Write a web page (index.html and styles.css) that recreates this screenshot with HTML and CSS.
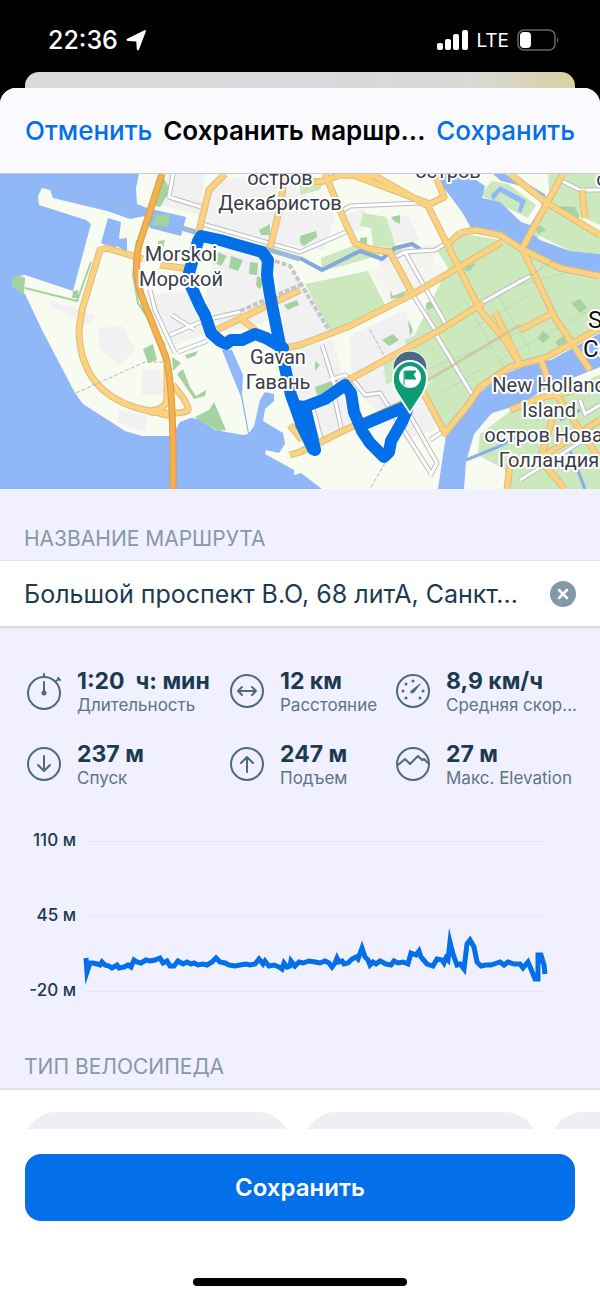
FILE: index.html
```html
<!DOCTYPE html>
<html lang="ru">

<head>
    <meta charset="UTF-8">
    <meta name="viewport" content="width=device-width, initial-scale=1">
    <title>Сохранить маршрут</title>
    <link rel="stylesheet" href="styles.css">
</head>

<body>
    <div class="status">
        <div class="status-time">
            <span>22:36</span>
            <svg width="20" height="22" viewBox="0 0 20 22"><path d="M18 1.500 Q20.500 0 19.600 3 L13 20.500 Q11.800 22.500 10.800 20.300 L10.300 12.500 L1.800 12 Q-0.500 11 1.200 9.800 Z" fill="#fff"/></svg>
        </div>
        <div class="status-right">
            <svg width="31" height="22" viewBox="0 0 31 22" fill="#fff">
                <rect x="0" y="14" width="6" height="7" rx="2"/>
                <rect x="8" y="10" width="6" height="11" rx="2"/>
                <rect x="16" y="5" width="6" height="16" rx="2"/>
                <rect x="25" y="1" width="6" height="20" rx="2"/>
            </svg>
            <span>LTE</span>
            <svg width="42" height="22" viewBox="0 0 42 22">
                <rect x="1" y="1" width="37" height="20" rx="6" fill="none" stroke="#666" stroke-width="1.500"/>
                <rect x="3" y="3" width="11" height="16" rx="4" fill="#fff"/>
                <path d="M40 8 Q42.500 11 40 14 Z" fill="#666"/>
            </svg>
        </div>
    </div>

    <div class="sheet-back"></div>
    <div class="sheet">
        <header class="nav">
            <button type="button" class="nav-btn">Отменить</button>
            <h1>Сохранить маршр...</h1>
            <button type="button" class="nav-btn">Сохранить</button>
        </header>

        <main class="content">
            <svg class="map" viewBox="0 174 600 315">
                <rect x="0" y="174" width="600" height="315" fill="#f8fbf0"/>
                <!-- кварталы -->
                <g fill="#f1f1f2">
                    <path d="M168 174 H205 L200 215 L160 205Z M212 180 L275 174 L335 215 L325 250 L270 242 L205 224Z"/>
                    <path d="M150 295 L190 290 L215 330 L175 345 Z M215 250 L262 258 L272 320 L225 333 L205 300Z"/>
                    <path d="M275 262 L295 275 L332 333 L285 350Z M288 352 L332 340 L346 385 L300 400Z"/>
                    <path d="M350 335 L405 310 L440 395 L434 430 L405 440 L352 385Z M303 415 L340 395 L355 425 L320 448Z"/>
                    <path d="M98 328 L122 326 L135 350 L120 366 L100 348Z M142 370 H160 L165 395 H142Z M118 410 L148 416 L145 432 L118 422Z"/>
                    <path d="M345 215 L365 208 L363 230 L343 232Z M385 220 L408 215 L420 240 L395 243Z M375 250 L430 245 L438 275 L390 300Z M50 300 L95 315 L90 325 L50 306Z"/>
                </g>
                <!-- парки -->
                <g fill="#cce8bd">
                    <path d="M305 284 L368 271 L388 311 L330 330Z M321 258 L361 243 L380 255 L335 268 L322 270Z M363 213 L386 217 L396 247 L373 246 L371 228 L360 226Z"/>
                    <path d="M437 250 L460 233 L500 240 L522 251 L600 280 V330 L545 358 L510 368 L480 388 L446 433 L424 390 L438 372 L415 334 L448 268Z"/>
                    <path d="M524 247 L552 202 L590 225 L600 232 V254 L570 251 L540 236Z M548 174 H600 V225 L550 203Z M480 195 L492 181 L508 184 L536 205 L528 218Z"/>
                    <path d="M480 434 L520 404 L600 375 V489 H505 L505 470 L478 455Z M382 248 L405 245 L400 253 L382 255Z M300 180 L325 178 L320 190 L300 195Z"/>
                    <path d="M405 340 L420 333 L440 372 L425 385 L410 360Z M383 360 L398 355 L402 377 L386 385Z"/>
                </g>
                <path d="M370 271 L420 252 L447 271 L388 305Z" fill="#f4f5ef"/>
                <path d="M502 290 L600 263 M470 330 L530 295 M485 350 L560 310 M500 360 L590 310 M465 300 L505 370 M495 290 L530 350 M425 370 L490 345 M438 395 L480 370" stroke="#bfdcb0" stroke-width="1" fill="none"/>
                <!-- вода -->
                <g fill="#90b8f8">
                    <path d="M0 174 H139 L136 188 L137 204 L147 208 L186 217 L181 236 L150 228 L145 216 L130 219 L107 211 L53 198 L50 190 L42 188 L38 196 L39 205 L86 220 L91 224 L73 291 L25 275 L14 277 L12 285 L25 294 L42 330 L75 393 L83 404 L125 431 L142 436 H172 L180 422 L190 418 L199 419 L215 430 L243 435 L248 434 L241 397 L222 350 L232 350 L243 375 L242 394 L249 433 L254 426 L260 400 L265 392 L274 394 L274 401 L265 409 L263 421 L283 433 L285 444 L279 453 L266 450 L265 454 L294 470 L294 475 L301 473 L322 489 H0Z"/>
                    <path d="M108 218 L121 222 L119 239 L127 238 L127 252 L117 246 L113 248 L101 243Z"/>
                    <path d="M437 174 H467 L485 186 L482 198 L500 202 L521 222 L530 225 L542 206 L540 198 L521 186 L501 181 L493 174 H505 L522 181 L545 194 L548 205 L530 232 L540 240 L570 251 L600 254 V274 L565 268 L520 247 L505 240 L480 231 L471 228 L462 212 L444 188Z"/>
                    <path d="M491 195 L500 186 L526 200 L521 213 L518 211 L520 203 L500 192 L493 201Z"/>
                    <path d="M600 333 L551 360 L535 362 L500 376 L476 396 L456 418 L446 435 L438 489 H464 L466 462 L474 434 L492 413 L518 405 L548 388 L600 367Z"/>
                </g>
                <path d="M300 258 L322 270 L360 251 L382 259 L395 248 L412 244 L420 249" stroke="#84a8dc" stroke-width="4" fill="none"/>
                <path d="M182 228 L205 235 L270 250 L300 259" stroke="#9bbad8" stroke-width="5" fill="none"/>
                <path d="M466 460 L498 447 L520 435 M560 420 L580 410 M570 450 L585 489" stroke="#84aef0" stroke-width="3" fill="none"/>
                <path d="M164 178 L170 190 L160 207 L153 205Z M155 215 L170 214 L168 227 L152 225Z" fill="#a4d2a1"/>
                <g fill="#a4d2a1">
                    <path d="M12 278 L18 275 L25 278 L24 295 L12 286Z M73 291 L78 290 L78 298 L72 298Z"/>
                    <path d="M143 349 L153 344 L157 360 L148 363Z M177 374 L183 369 L190 387 L196 396 L206 390 L205 396 L194 399 L188 390Z M195 417 L209 410 L214 402 L226 430 L218 431Z"/>
                    <path d="M172 357 L181 363 L173 371Z M185 355 L198 351 L196 355 L187 359Z M259 230 L270 224 V235 L261 235Z M158 241 L165 240 L163 248 L158 249Z"/>
                    <path d="M218 252 L227 256 L221 266 L211 261Z M231 256 L243 260 L238 271 L229 268Z M250 262 L258 263 L257 275 L249 274Z M257 276 L265 280 L260 289 L256 286Z M284 305 L297 300 L299 305 L288 310Z"/>
                    <path d="M300 236 L316 231 L317 237 L304 246 L300 243Z M391 217 L400 215 V224 L394 221Z M360 238 L367 237 V244 L360 244Z M382 340 L393 334 L399 340 L389 346Z M315 387 L340 378 L330 393 L317 395Z M315 361 L320 365 L315 371Z"/>
                    <path d="M408 320 L413 330 L410 336Z M465 267 L476 263 L470 271 L464 270Z M536 230 L540 225 L546 230 L538 234Z M575 207 L580 218 L566 214 L555 206Z M571 303 L580 299 L587 308 L580 313Z M538 338 L543 331 L550 337 L543 343Z M555 342 L565 335 L566 343 L558 346Z"/>
                    <path d="M426 303 L434 300 L433 308 L426 310Z M390 290 L393 296 L408 290 L402 297 L391 299Z"/>
                </g>
                <path d="M25 288 L77 301 L91 262 M137 240 L133 275 L138 303 L165 345" stroke="#a4d2a1" stroke-width="2" fill="none"/>
                <!-- улицы -->
                <g fill="none" stroke-linejoin="round" stroke="#bcbcc1" stroke-width="5">
                    <path id="streets" d="M173 174 L169 197 L201 207 M202 224 L300 252 L346 232 M340 212 L350 206 L420 203 M150 290 L155 310 L175 353 M170 335 L205 320 L240 312 M172 315 L195 330 M178 352 L207 341 M393 258 L405 252 L435 250 L460 235 M405 252 L445 323 M413 295 L437 333 M435 333 L473 396 M483 302 L530 276 M322 345 L335 386 M312 405 L322 443 M334 395 L342 432 M330 380 L345 375 L355 382 L365 395 L380 393 L432 475 M403 403 L437 463 L430 476 M430 440 L442 432 M560 180 L580 190 H600 M580 400 L585 414 L600 405 M520 480 L600 430"/>
                </g>
                <use href="#streets" fill="none" stroke="#fff" stroke-width="3"/>
                <g fill="none" stroke-linejoin="round" stroke="#dfb985" stroke-width="7">
                    <path id="roads" d="M225 174 L209 190 L198 235 M325 174 L345 222 L355 243 L370 249 L390 252 L413 295 M300 183 L324 181 L340 175 L375 176 L428 206 L480 310 L505 340 L519 363 M285 174 L280 207 L270 248 M350 174 L430 204 L444 197 L435 174 M510 174 L547 203 L600 235 M563 174 L547 203 L523 247 M582 190 L585 218 M460 233 L475 230 L500 235 L520 248 L560 268 L600 276 M460 233 L448 244 M502 242 L413 294 L350 326 L300 345 L280 349 M523 250 L555 318 L590 370 M345 382 L440 330 L483 303 M520 330 L553 313 M290 455 L300 452 L345 430 L410 400 M290 425 L302 440 M422 390 L445 433 L468 405 L480 387 L510 367 L545 358 L600 328 M495 312 L520 364 M541 360 L550 385 L600 460 M600 385 L540 398 L510 410 M507 489 L510 465 L545 455 L600 420 M555 410 L540 460 L565 489 M210 333 L300 290 M238 316 L255 330 M79 330 L82 310 L100 250 L107 248 L143 259 M160 265 L190 269 M79 330 Q80 395 145 410 L172 416 M173 385 Q190 405 188 410 Q184 415 150 412 M167 365 V400 Q165 410 148 411"/>
                </g>
                <use href="#roads" fill="none" stroke="#fbd27d" stroke-width="5"/>
                <path d="M162 174 L139 245 Q132 275 145 305 L165 355 Q174 380 173 489" fill="none" stroke="#d99a45" stroke-width="7"/>
                <path d="M162 174 L139 245 Q132 275 145 305 L165 355 Q174 380 173 489" fill="none" stroke="#f5b14e" stroke-width="5"/>
                <path d="M42 185 L145 214 M76 393 L145 362 L163 362 M370 330 L385 357 M385 463 L370 489 M530 276 L560 256" fill="none" stroke="#b4b4b4" stroke-width="1" stroke-dasharray="4 2"/>
                <path d="M275 261 L290 266 L330 332 M240 311 L300 285" fill="none" stroke="#c6c6c8" stroke-width="4" stroke-dasharray="5 2"/>
                <path d="M420 385 L520 325" stroke="#ccb995" stroke-width="3" opacity=".6"/>

                <g class="place">
                    <text x="280" y="185">остров</text>
                    <text x="280" y="210">Декабристов</text>
                    <text x="448" y="178">остров</text>
                    <text x="602" y="186">о</text>
                </g>
                <!-- трек -->
                <path d="M315 450 L306 412 M313 449 L301 424 L297 406 L304 407 L325 399 L345 385 L351 393 L354 412 L362 431 L370 443 L384 457 L389 452 L391 441 L402 422 L409 405 L362 425 M300 420 L291 395 L280 345 L270 295 L267 275 L268 260 L262 252 L220 240 L201 236 L198 241 L193 259 L189 273 L191 286 L200 306 L205 315 L211 333 L220 341 L226 344 L231 340 L242 340 L255 334 L266 338 L283 348" fill="none" stroke="#0370e9" stroke-width="12" stroke-linejoin="round" stroke-linecap="round"/>
                <g class="place">
                    <text x="181" y="261">Morskoi</text>
                    <text x="181" y="286">Морской</text>
                    <text x="278" y="364">Gavan</text>
                    <text x="278" y="389">Гавань</text>
                    <text x="549" y="392">New Holland</text>
                    <text x="549" y="417">Island</text>
                    <text x="549" y="442">остров Новая</text>
                    <text x="549" y="467">Голландия</text>
                </g>
                <g class="city">
                    <text x="588" y="328">Sa</text>
                    <text x="583" y="357">Са</text>
                </g>
                <circle cx="410" cy="368" r="17" fill="#476b86" stroke="#fff" stroke-width="1"/>
                <path d="M410 413 L397 393 C392 386 393 378 393 378 A17 17 0 0 1 427 378 C427 385 423 393 423 393Z" fill="#0d9b78" stroke="#fff" stroke-width="2" stroke-linejoin="round"/>
                <circle cx="410" cy="377" r="11" fill="#fff"/>
                <path d="M404 371 V385 M405 371 H416 L413 375 L416 379 H405Z" fill="#0d9b78" stroke="#0d9b78" stroke-width="1"/>
            </svg>

            <label class="section-title" for="route-name">НАЗВАНИЕ МАРШРУТА</label>
            <div class="field">
                <input type="text" id="route-name" value="Большой проспект В.О, 68 литА, Санкт...">
                <button type="button" class="clear" aria-label="Очистить">
                    <svg width="26" height="26" viewBox="0 0 26 26"><circle cx="13" cy="13" r="13" fill="#8399a8"/><path d="M9 9 L17 17 M17 9 L9 17" stroke="#fff" stroke-width="2.500" stroke-linecap="round"/></svg>
                </button>
            </div>

            <div class="stats">
                <div class="stat">
                    <svg viewBox="0 0 36 40"><circle cx="17" cy="22" r="16"/><path d="M17 22 V11 M17 6 V3 M29 10 L32 8"/><path d="M31 7 L33 9"/><circle cx="17" cy="22" r="1.500"/></svg>
                    <div><strong>1:20&nbsp; ч: мин</strong><span>Длительность</span></div>
                </div>
                <div class="stat">
                    <svg viewBox="0 0 36 40"><circle cx="17" cy="20" r="16"/><path d="M8 20 H26 M12 16 L8 20 L12 24 M22 16 L26 20 L22 24"/></svg>
                    <div><strong>12 км</strong><span>Расстояние</span></div>
                </div>
                <div class="stat">
                    <svg viewBox="0 0 36 40"><circle cx="17" cy="20" r="16"/><path d="M24 13 L15 20 Q14 22 16 22 Q17 22 18 21Z" fill="#4e6b7e" stroke-width="1"/><path class="dots" d="M10 13 h0 M17 10 h0 M7 20 h0 M27 20 h0 M10 27 h0 M24 27 h0"/></svg>
                    <div><strong>8,9 км/ч</strong><span>Средняя скор...</span></div>
                </div>
                <div class="stat">
                    <svg viewBox="0 0 36 40"><circle cx="17" cy="20" r="16"/><path d="M17 12 V27 M11 21 L17 27 L23 21"/></svg>
                    <div><strong>237 м</strong><span>Спуск</span></div>
                </div>
                <div class="stat">
                    <svg viewBox="0 0 36 40"><circle cx="17" cy="20" r="16"/><path d="M17 28 V13 M11 19 L17 13 L23 19"/></svg>
                    <div><strong>247 м</strong><span>Подъем</span></div>
                </div>
                <div class="stat">
                    <svg viewBox="0 0 36 40"><circle cx="17" cy="20" r="16"/><path d="M2 21 L9 15 L14 20 L22 12 L26 16 L28 15 L33 20"/></svg>
                    <div><strong>27 м</strong><span>Макс. Elevation</span></div>
                </div>
            </div>

            <div class="chart">
                <div class="chart-axis">
                    <span>110 м</span>
                    <span>45 м</span>
                    <span>-20 м</span>
                </div>
                <svg class="chart-plot" viewBox="85 841 462 151" preserveAspectRatio="none">
                    <path d="M85 841.500 H547 M85 916.500 H547 M85 991.500 H547" stroke="#e6e6ef"/>
                    <polyline fill="none" stroke="#0370e9" stroke-width="5" stroke-miterlimit="16" points="86,958 87,972 90,963 93,963 97,964 100,965 102,962 105,965 109,966 112,968 117,965 119,968 124,967 128,965 131,967 134,960 137,962 141,963 146,960 150,961 155,960 160,958 163,963 167,961 170,966 174,966 178,961 183,964 187,962 191,964 194,963 198,965 203,964 207,965 212,962 216,958 220,962 225,963 229,965 235,966 240,965 246,964 250,965 255,964 259,959 263,964 265,961 269,966 274,965 279,967 282,969 284,963 287,967 290,966 291,961 295,966 299,962 303,963 309,961 315,962 320,963 325,961 329,963 332,967 335,963 337,958 339,962 342,961 344,964 348,963 352,959 356,957 358,959 362,948 365,957 368,960 370,965 373,962 376,964 380,961 386,964 391,965 394,961 398,963 403,962 408,964 411,953 416,955 419,951 421,957 427,964 433,966 437,959 442,960 444,963 446,958 448,960 450,942 453,954 457,965 460,964 464,969 467,944 470,940 474,947 477,962 481,966 486,965 491,965 497,963 500,962 504,965 508,962 514,964 520,964 523,968 528,962 531,969 535,979 538,979 538,955 541,955 544,965 545,974"/>
                </svg>
            </div>

            <h2 class="section-title">ТИП ВЕЛОСИПЕДА</h2>
            <div class="chips">
                <div class="chip"></div>
                <div class="chip chip-narrow"></div>
                <div class="chip"></div>
            </div>
        </main>

        <footer class="footer">
            <button type="button" class="save">Сохранить</button>
            <div class="home-bar"></div>
        </footer>
    </div>
</body>

</html>
```
FILE: styles.css
```css
* {
    box-sizing: border-box;
    margin: 0;
    padding: 0;
}

body {
    display: flex;
    flex-direction: column;
    height: 100vh;
    overflow: hidden;
    background: #000;
    color: #1c3a50;
    font-family: Inter, "Noto Sans", sans-serif;
}

button {
    border: none;
    background: none;
    font-family: inherit;
    cursor: pointer;
}

/* строка состояния */
.status {
    display: flex;
    justify-content: space-between;
    align-items: center;
    flex: none;
    height: 72px;
    padding: 8px 41px 0 48px;
    color: #fff;
}

.status-time,
.status-right {
    display: flex;
    align-items: center;
    gap: 8px;
}

.status-time {
    font-size: 25px;
    font-weight: 500;
}

.status-right {
    font-size: 19px;
}

.sheet-back {
    flex: none;
    height: 32px;
    margin: 0 25px -16px;
    border-radius: 14px 14px 0 0;
    background: linear-gradient(90deg, #dadad9, #d7dadb 50%, #d9d9d5 82%, #d9d1a0);
}

.sheet {
    display: flex;
    flex-direction: column;
    flex: 1;
    min-height: 0;
    border-radius: 16px 16px 0 0;
    background: #fff;
    overflow: hidden;
}

.nav {
    display: flex;
    justify-content: space-between;
    align-items: center;
    flex: none;
    height: 86px;
    padding: 0 25px;
    background: #fafaff;
    border-bottom: 1px solid #c9ccd6;
}

.nav h1 {
    color: #000;
    font-size: 26px;
    font-weight: 600;
    white-space: nowrap;
}

.nav-btn {
    color: #0370e9;
    font-size: 26px;
    font-weight: 500;
}

.content {
    flex: 1;
    min-height: 0;
    overflow: hidden;
    background: #f0f0ff;
}

/* карта */
.map {
    display: block;
    width: 100%;
}

.place,
.city {
    font-family: Roboto, sans-serif;
    paint-order: stroke;
    stroke: #fff;
    stroke-width: 4px;
    stroke-linejoin: round;
}

.place {
    fill: #3a3d4a;
    font-size: 20px;
    text-anchor: middle;
}

.city {
    fill: #111;
    font-size: 24px;
}

.section-title {
    display: block;
    height: 71px;
    padding: 38px 24px 0;
    color: #8799a6;
    font-size: 21px;
    font-weight: 400;
    line-height: 24px;
}

.field {
    display: flex;
    align-items: center;
    height: 68px;
    padding: 0 24px;
    background: #fff;
    border-top: 1px solid #e2e3ea;
    border-bottom: 2px solid #d9dae2;
}

.field input {
    flex: 1;
    min-width: 0;
    border: none;
    outline: none;
    background: none;
    color: #1c3a50;
    font-family: inherit;
    font-size: 25px;
}

.clear {
    display: flex;
}

/* показатели */
.stats {
    display: grid;
    grid-template-columns: 203fr 166fr 179fr;
    row-gap: 23px;
    padding: 40px 25px 0 27px;
}

.stat {
    display: flex;
    gap: 14px;
    height: 50px;
    min-width: 0;
    white-space: nowrap;
}

.stat svg {
    flex: none;
    width: 36px;
    height: 40px;
    margin-top: 3px;
    fill: none;
    stroke: #4e6b7e;
    stroke-width: 2;
    stroke-linecap: round;
    stroke-linejoin: round;
}

.stat .dots {
    stroke-width: 3;
}

.stat strong {
    display: block;
    font-size: 23px;
    font-weight: 700;
    line-height: 27px;
}

.stat span {
    display: block;
    color: #5d7585;
    font-size: 17px;
    line-height: 20px;
}

/* профиль высоты */
.chart {
    display: flex;
    gap: 9px;
    padding: 40px 53px 0 24px;
}

.chart-axis {
    display: flex;
    flex-direction: column;
    justify-content: space-between;
    flex: none;
    width: 52px;
    height: 168px;
    font-size: 17px;
    font-weight: 500;
    line-height: 18px;
    text-align: right;
    white-space: nowrap;
}

.chart-plot {
    flex: 1;
    min-width: 0;
    height: 151px;
    margin: 10px 0 25px;
    overflow: visible;
}

.chips {
    display: flex;
    gap: 14px;
    height: 110px;
    padding: 22px 24px;
    background: #fff;
    border-top: 2px solid #e2e3ea;
    overflow: hidden;
}

.chip {
    flex: none;
    width: 266px;
    height: 64px;
    border-radius: 32px;
    background: #efeef5;
}

.chip-narrow {
    width: 233px;
}

.footer {
    flex: none;
    padding: 25px 25px 12px;
    background: #fff;
}

.save {
    display: block;
    width: 100%;
    height: 67px;
    border-radius: 16px;
    background: #0370e9;
    color: #fff;
    font-size: 24px;
    font-weight: 600;
}

.home-bar {
    width: 214px;
    height: 8px;
    margin: 57px auto 0;
    border-radius: 4px;
    background: #000;
}
```
